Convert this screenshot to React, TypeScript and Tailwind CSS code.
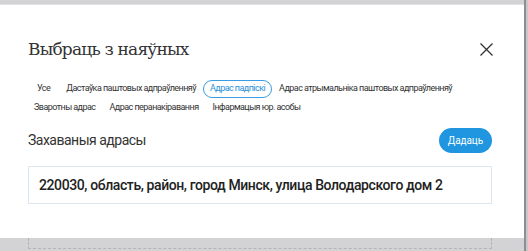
import React from "react";

const tabs = [
  "Усе",
  "Дастаўка паштовых адпраўленняў",
  "Адрас падпіскі",
  "Адрас атрымальніка паштовых адпраўленняў",
  "Зваротны адрас",
  "Адрас перанакіравання",
  "Інфармацыя юр. асобы",
];

export default function App() {
  return (
    <div className="w-[528px] h-[251px] overflow-hidden flex bg-[#d3d3d5]" style={{ fontFamily: "Roboto, 'Liberation Sans', sans-serif" }}>
      <div className="w-[524px] flex flex-col">
        <div className="h-[5px] bg-[#d3d3d5] border-b border-[#e2e2e4]" />
        <div className="h-[233px] bg-white px-[28px] pt-[31px] flex flex-col">
          <div className="flex items-center justify-between h-[26px]">
            <h1 className="text-[17px] tracking-[-0.8px] text-[#333] leading-[26px]" style={{ fontFamily: "'DejaVu Serif', serif" }}>
              Выбраць з наяўных
            </h1>
            <svg width="13" height="13" viewBox="0 0 13 13" className="mr-[3px]">
              <path d="M0.5 0.5L12.5 12.5M12.5 0.5L0.5 12.5" stroke="#333" strokeWidth="1.3" />
            </svg>
          </div>
          <div className="mt-[18px] flex flex-wrap gap-y-[1px] ml-[-1px]">
            {tabs.map((t, i) => (
              <div
                key={t}
                className={
                  "h-[18px] px-[6px] flex items-center rounded-full text-[9px] tracking-[-0.55px] border " +
                  (i === 0 ? "ml-[3px] mr-[2px] " : "") +
                  (t === "Адрас падпіскі" ? "border-[#3a9de2] text-[#2a8fd8]" : "border-transparent text-[#333]")
                }
              >
                {t}
              </div>
            ))}
          </div>
          <div className="mt-[11px] flex items-center justify-between">
            <span className="text-[14px] tracking-[-0.5px] text-[#333]">Захаваныя адрасы</span>
            <button className="h-[25px] px-[9px] mr-[4px] rounded-full bg-[#1f96df] text-white text-[10px] tracking-[-0.1px]">Дадаць</button>
          </div>
          <div className="mt-[13px] mr-[4px] h-[38px] border border-[#dde5f0] flex items-center px-[10px]">
            <span className="text-[14px] font-medium tracking-[-0.4px] text-[#222] whitespace-nowrap">
              220030, область, район, город Минск, улица Володарского дом 2
            </span>
          </div>
        </div>
        <div className="flex-1 bg-[#d3d3d5] px-[28px]">
          <div className="h-[11px] w-[464px] border-x border-b border-dashed border-[#b5b5b9]" />
        </div>
      </div>
      <div className="w-[2px] bg-[#8e8e92]" />
      <div className="w-[2px] bg-[#c8c8ca]" />
    </div>
  );
}
